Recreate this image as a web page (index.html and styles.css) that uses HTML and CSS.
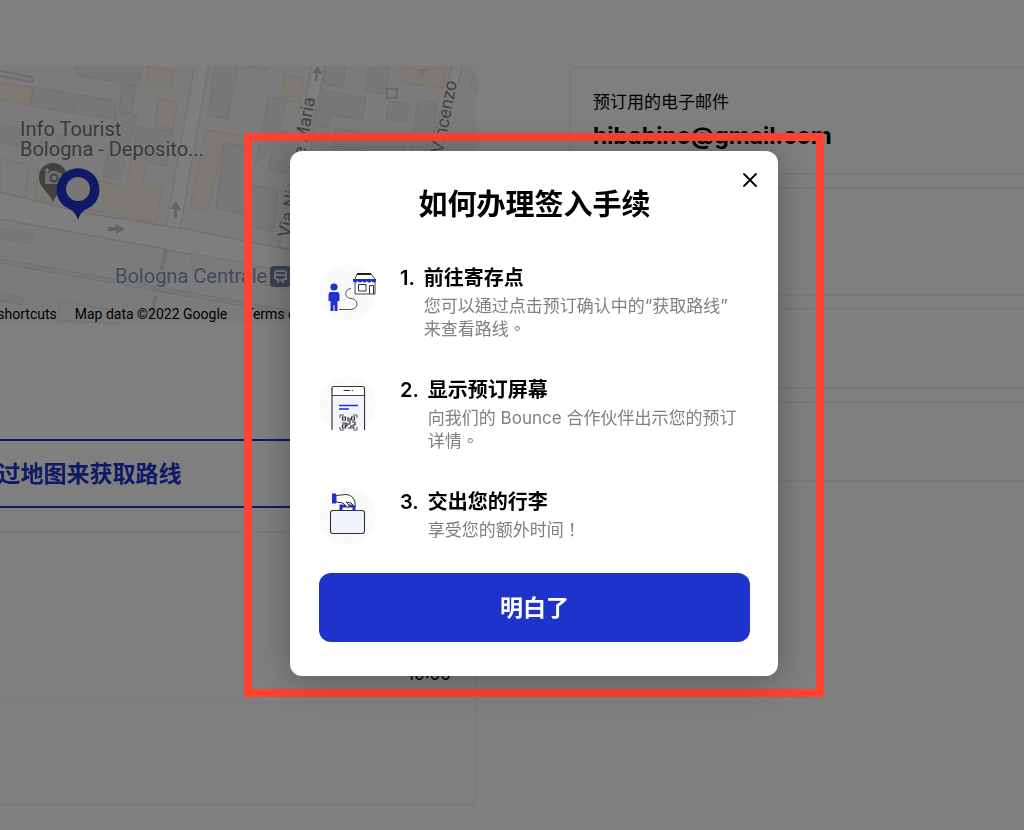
FILE: index.html
```html
<!DOCTYPE html>
<html lang="zh-Hans">
<head>
    <meta charset="UTF-8">
    <meta name="viewport" content="width=device-width, initial-scale=1.0">
    <title>Bounce</title>
    <link rel="stylesheet" href="styles.css">
</head>
<body>
    <main class="page">
        <section class="main-column">
            <div class="map">
                <svg class="map-canvas" viewBox="-321 0 798 258" preserveAspectRatio="xMidYMid slice" aria-hidden="true">
                    <rect x="-321" y="0" width="798" height="258" fill="#f7f7f8"/>
                    <!-- streets -->
                    <g fill="#fdfdfd" stroke="#dfe1e4" stroke-width="1.5">
                        <path d="M-321 75 L0 126 L80 146 L165 160 L181 162 L280 182 L477 222 V250 L280 206 L168 184 L165 183 L0 153 L-321 95Z"/>
                        <path d="M195 -2 L209 -2 L180 163 L166 160Z" stroke-width="1.2"/>
                        <path d="M312 -2 L325 -2 L293 184 L279 181Z"/>
                        <path d="M452 -2 L463 -2 L440 90 L430 90Z"/>
                    </g>
                    <!-- rails -->
                    <path d="M-321 132 L0 195 L243 238 L477 284" fill="none" stroke="#d6dce6" stroke-width="5"/>
                    <path d="M-321 132 L0 195 L243 238 L477 284" fill="none" stroke="#eceff4" stroke-width="3"/>
                    <path d="M166 184 L157 224 M156 230 L151 250" fill="none" stroke="#dddfe2" stroke-width="4"/>
                    <!-- buildings -->
                    <g fill="#eeeeef" stroke="#e0e1e3" stroke-width="1">
                        <path d="M77 -2 L143 -2 L139 20 L76 9Z"/>
                        <path d="M33 21 L116 35 L114 53 L73 47 L31 40Z"/>
                        <path d="M75 29 L73 47"/>
                        <path d="M122 19 L136 20 L131 47 L119 45Z"/>
                        <path d="M116 45 L138 49 L128 82 L119 114 L103 111Z"/>
                        <path d="M138 61 L172 65 L167 100 L148 96 L134 76Z"/>
                        <path d="M215 -2 L238 -2 L228 53 L208 49Z"/>
                        <path d="M240 -2 L267 -2 L266 6Z"/>
                        <path d="M269 31 L286 34 L279 64 L300 70 L298 108 L269 103 L271 82 L255 98 L263 58Z"/>
                        <path d="M0 59 L65 70 L64 88 L0 77Z"/>
                        <path d="M224 76 L251 83 L243 148 L216 142Z"/>
                        <path d="M253 119 L278 124 L274 166 L246 160Z"/>
                        <path d="M326 -2 L346 -2 L343 21 L323 18Z"/>
                        <path d="M369 -2 L389 -2 L386 28 L365 25Z"/>
                        <path d="M320 24 L366 32 L362 54 L331 49 L329 62 L312 59Z"/>
                        <path d="M389 35 L409 37 L406 56 L386 53Z"/>
                        <path d="M418 34 L437 37 L432 90 L410 86Z"/>
                        <path d="M336 62 L405 74 L404 88 L332 82Z"/>
                        <path d="M0 162 L33 168 L32 178 L0 172Z"/>
                        <path d="M0 227 L24 232 L22 239 L0 235Z"/>
                        <path d="M60 235 L122 246 L120 258 L58 254Z" fill="none"/>
                        <path d="M0 93 L29 99 L25 132 L0 127Z" fill="none"/>
                    </g>
                    <g fill="#f9f0e7" stroke="#f3e2d0" stroke-width="1">
                        <path d="M0 17 L32 21 L30 39 L0 34Z"/>
                        <path d="M148 0 L174 5 L171 23 L146 19Z"/>
                        <path d="M158 32 L177 36 L173 63 L155 60Z"/>
                        <path d="M206 64 L250 71 L249 80 L224 77 L208 145 L190 141Z"/>
                        <path d="M284 9 L304 12 L300 37 L281 34Z"/>
                        <path d="M402 -2 L447 -2 L444 22 L401 17Z"/>
                        <path d="M472 11 L477 12 V25 L470 23Z"/>
                        <path d="M131 92 L146 96 L143 117 L162 121 L157 157 L62 139 L34 133 L38 103 L80 111 L127 121Z"/>
                        <path d="M191 187 L290 206 L286 223 L193 204Z" fill="#f8f5f1"/>
                    </g>
                    <path d="M0 5 L31 11 Q34 13 32 16 L0 10" fill="none" stroke="#d2dae4" stroke-width="2"/>
                    <rect x="387" y="23" width="10" height="9" fill="none" stroke="#ccd5df" stroke-width="2"/>
                    <path d="M418 4 h10 M422 4 v6" stroke="#f0d9c0" stroke-width="2"/>
                    <!-- one way arrows -->
                    <g fill="#c8c8c9">
                        <path d="M108 161 h8 v-3 l9 5 -9 5 v-3 h-8Z"/>
                        <path d="M174 152 v-9 h-4 l6 -8 5 9 h-4 v8Z"/>
                        <path d="M314 15 l2 -8 h-4 l6 -7 4 8 h-4 l-1 7Z"/>
                    </g>
                    <!-- grey place pin -->
                    <path d="M53 137 C51 127 39 123 39 111 A14 14 0 0 1 67 111 C67 123 55 127 53 137Z" fill="#828282"/>
                    <path d="M45 107 h4 l2 -2 h6 l2 2 h3 v11 h-17Z" fill="#dedede"/>
                    <circle cx="54" cy="112" r="3.5" fill="#dedede" stroke="#828282" stroke-width="2"/>
                    <path d="M47 102 v5 M44.500 104.500 h5" stroke="#eeeeee" stroke-width="1.500"/>
                    <!-- selected stash point pin -->
                    <path d="M78 154 C75 144 70 144 64 140 A21.500 21.500 0 1 1 92 140 C86 144 81 144 78 154Z" fill="#1e33cc"/>
                    <circle cx="78" cy="123" r="12" fill="#f3efeb"/>
                    <g class="map-label">
                        <text x="20" y="70">Info Tourist</text>
                        <text x="20" y="90">Bologna - Deposito...</text>
                        <text class="street" transform="translate(290 172) rotate(-80)">Via Nicolò</text>
                        <text class="street" transform="translate(303 101) rotate(-80)">de Maria</text>
                        <text class="street" transform="translate(443 88) rotate(-79)">Vincenzo</text>
                        <text class="station" x="115" y="217">Bologna Centrale</text>
                    </g>
                    <rect x="270" y="200" width="21" height="21" rx="4" fill="#7685ac"/>
                    <path d="M275 213 v-6 q0 -2 2 -2 h7 q2 0 2 2 v6 h-3 M275 213 h3 M275 209 h11 M278 217 v-3 h5 v3" fill="none" stroke="#e8ebf3" stroke-width="2"/>
                </svg>
                <div class="map-credits">
                    <span>Keyboard shortcuts</span>
                    <span>Map data ©2022 Google</span>
                    <span>Terms of Use</span>
                    <span>Report a map error</span>
                </div>
            </div>
            <button class="directions-btn" type="button">通过地图来获取路线</button>
            <div class="card hours">
                <div class="hours-row"><span>10:00</span></div>
            </div>
        </section>
        <aside class="side-column">
            <div class="card info tall">
                <p class="info-label">预订用的电子邮件</p>
                <p class="info-value">hibabino@gmail.com</p>
            </div>
            <div class="card info tall"></div>
            <div class="card info"></div>
            <div class="card info"></div>
        </aside>
    </main>

    <div class="overlay">
        <div class="highlight">
            <div class="modal" role="dialog" aria-modal="true" aria-labelledby="modalTitle">
                <button class="close-btn" type="button" aria-label="关闭">
                    <svg width="17" height="17" viewBox="0 0 17 17"><path d="M3 3 L15 15 M15 3 L3 15" stroke="#000" stroke-width="1.8" stroke-linecap="round"/></svg>
                </button>
                <h1 class="modal-title" id="modalTitle">如何办理签入手续</h1>
                <div class="steps">
                    <div class="step">
                        <svg class="step-icon" viewBox="0 0 57 57" aria-hidden="true">
                            <circle cx="28.500" cy="28.500" r="28.500" fill="#fafafa"/>
                            <circle cx="15" cy="23" r="3.600" fill="#1e33cc"/>
                            <path d="M12 28 h6 q2.500 0 2.500 3 v6 h-2 v10 h-3 v-6 h-1 v6 h-3 v-10 h-2 v-6 q0 -3 2.500 -3Z" fill="#1e33cc"/>
                            <path d="M20 45.500 H31 C40 45.500 40 35 32 34.500 C25 34 25 25 32 24.500" fill="none" stroke="#555" stroke-width="1"/>
                            <path d="M38 10 H52 L56 15 V30 H36 V15Z" fill="#fff" stroke="#444" stroke-width="1"/>
                            <path d="M38 10 H52" stroke="#111" stroke-width="1.800"/>
                            <path d="M34 15 H57 V17 a2.500 2.500 0 0 1 -4.600 0 a2.500 2.500 0 0 1 -4.600 0 a2.500 2.500 0 0 1 -4.600 0 a2.500 2.500 0 0 1 -4.600 0 a2.500 2.500 0 0 1 -4.600 0Z" fill="#1e33cc"/>
                            <path d="M39.500 20.500 h7.500 v6.500 h-7.500Z M50.500 30 v-8.500 h4 v8.500" fill="none" stroke="#333" stroke-width="1"/>
                        </svg>
                        <span class="step-number">1.</span>
                        <div class="step-body">
                            <h2 class="step-title">前往寄存点</h2>
                            <p class="step-text" lang="zh-Hant">您可以通过点击预订确认中的“获取路线”来查看路线。</p>
                        </div>
                    </div>
                    <div class="step">
                        <svg class="step-icon" viewBox="0 0 57 57" aria-hidden="true">
                            <circle cx="28.500" cy="28.500" r="28.500" fill="#fafafa"/>
                            <path d="M13 54 V12.500 q0 -2 2 -2 H43.500 q2 0 2 2 V54" fill="#fff" stroke="#333" stroke-width="1.200"/>
                            <path d="M14 20 H45 V53 H14Z" fill="#f2f5ff"/>
                            <path d="M13 19.500 H45.500" stroke="#444" stroke-width="1"/>
                            <path d="M24.500 14.500 h7 M33 14.500 h1" stroke="#333" stroke-width="1"/>
                            <path d="M20 29.500 H39 M20 33 H30" stroke="#1e33cc" stroke-width="1.500"/>
                            <path d="M21 42 v-3 h4 M34 39 h4 v3 M21 51 v3 h4 M34 54 h4 v-3" fill="none" stroke="#555" stroke-width="1"/>
                            <g fill="none" stroke="#333" stroke-width="1.200">
                                <path d="M23.500 41 h3 v3 h-3Z M32.500 41 h3 v3 h-3Z M23.500 49 h3 v3 h-3Z"/>
                                <path d="M29 41 v4 h2 v3 h-3 v2 h-2 M23 47 h4 v1 M33 46 h3 v3 h-2 v3 h2 M29 52 h3 v-3 M31 42 v2"/>
                            </g>
                        </svg>
                        <span class="step-number">2.</span>
                        <div class="step-body">
                            <h2 class="step-title">显示预订屏幕</h2>
                            <p class="step-text" lang="zh-Hant">向我们的 Bounce 合作伙伴出示您的预订详情。</p>
                        </div>
                    </div>
                    <div class="step">
                        <svg class="step-icon" viewBox="0 0 57 57" aria-hidden="true">
                            <circle cx="28.500" cy="28.500" r="28.500" fill="#fafafa"/>
                            <path d="M22 23 V18 H35 V23" fill="none" stroke="#1e33cc" stroke-width="3"/>
                            <path d="M17 7.500 L27 6.500 Q34 7 36 14 V19 L32 15 L27 14 L30 17 Q31 20 28 19 L24 15 L17 14Z" fill="#fff" stroke="#333" stroke-width="1" stroke-linejoin="round"/>
                            <rect x="13" y="5.500" width="4" height="10" fill="#1e33cc"/>
                            <rect x="11.500" y="22.500" width="34" height="23" rx="2.500" fill="#f0f4ff" stroke="#333" stroke-width="1.100"/>
                        </svg>
                        <span class="step-number">3.</span>
                        <div class="step-body">
                            <h2 class="step-title">交出您的行李</h2>
                            <p class="step-text" lang="zh-Hant">享受您的额外时间！</p>
                        </div>
                    </div>
                </div>
                <button class="confirm-btn" type="button">明白了</button>
            </div>
        </div>
    </div>
</body>
</html>
```

FILE: styles.css
```css
* {
    margin: 0;
    padding: 0;
    box-sizing: border-box;
}
body {
    font-family: Inter, 'Noto Sans CJK SC', sans-serif;
    font-size: 17px;
    color: #000;
    background: #fff;
    min-height: 100vh;
    overflow: hidden;
}
button {
    font-family: inherit;
    cursor: pointer;
}
/* page behind the dialog, wider than the window */
.page {
    display: flex;
    align-items: flex-start;
    gap: 92px;
    padding-top: 66px;
    margin: 0 -200px 0 -321px;
}
.main-column {
    flex: 0 0 798px;
}
.side-column {
    flex: 1;
    display: flex;
    flex-direction: column;
    gap: 12px;
}
.map {
    position: relative;
    height: 258px;
    border-radius: 12px;
    overflow: hidden;
}
.map-canvas {
    display: block;
    width: 100%;
    height: 100%;
}
.map-label text {
    font-family: Roboto, sans-serif;
    font-size: 20px;
    fill: #757575;
    stroke: #f8f8f8;
    stroke-width: 3px;
    paint-order: stroke;
}
.map-label .street {
    font-size: 18px;
    fill: #858585;
}
.map-label .station {
    fill: #8794b8;
}
.map-credits {
    position: absolute;
    right: 0;
    bottom: 0;
    display: flex;
    gap: 18px;
    padding: 0 14px;
    font-family: Roboto, sans-serif;
    font-size: 14px;
    line-height: 20px;
    white-space: nowrap;
}
.directions-btn {
    display: block;
    width: 100%;
    height: 69px;
    margin-top: 115px;
    padding-bottom: 4px;
    border: 2px solid #1e33cc;
    border-radius: 12px;
    background: #fff;
    color: #1e33cc;
    font-size: 23px;
    font-weight: 600;
}
.card {
    border: 2px solid #f3f3f3;
    border-radius: 8px;
}
.hours {
    height: 275px;
    margin-top: 23px;
    padding: 0 24px;
}
.hours-row {
    display: flex;
    justify-content: flex-end;
    align-items: flex-end;
    height: 170px;
    padding-bottom: 18px;
    border-bottom: 1px solid #f6f6f6;
}
.info {
    min-height: 81px;
    padding: 22px;
}
.info.tall {
    min-height: 109px;
}
.info-label {
    line-height: 24px;
}
.info-value {
    margin-top: 8px;
    font-size: 23px;
    font-weight: 700;
    line-height: 28px;
}
.overlay {
    position: fixed;
    inset: 0;
    display: flex;
    align-items: center;
    justify-content: center;
    padding-left: 44px;
    background: rgba(0, 0, 0, 0.5);
}
.highlight {
    width: 580px;
    max-width: 100%;
    padding: 10px 38px 13px;
    border: 8px solid #ff432f;
}
.modal {
    position: relative;
    padding: 30px 28px 34px 29px;
    border-radius: 12px;
    background: #fff;
    box-shadow: 0 4px 36px rgba(0, 0, 0, 0.3);
}
.close-btn {
    position: absolute;
    top: 20px;
    right: 20px;
    width: 17px;
    height: 17px;
    border: none;
    background: none;
}
.close-btn svg {
    display: block;
}
.modal-title {
    text-align: center;
    font-size: 29px;
    font-weight: 600;
    line-height: 48px;
}
.steps {
    display: flex;
    flex-direction: column;
    gap: 35px;
    margin: 35px 0 28px;
}
.step {
    display: flex;
    align-items: flex-start;
}
.step-icon {
    flex: none;
    width: 57px;
    height: 57px;
    margin-right: 24px;
}
.step-number {
    margin-right: 9px;
    font-size: 20px;
    font-weight: 600;
    line-height: 28px;
}
.step-body {
    flex: 1;
    padding-right: 7px;
}
.step-title {
    font-size: 20px;
    font-weight: 600;
    line-height: 28px;
}
.step-text {
    margin-top: 3px;
    font-family: Inter, 'Noto Sans CJK TC', sans-serif;
    line-height: 23px;
    color: #7f7f84;
}
.confirm-btn {
    display: block;
    width: 100%;
    height: 69px;
    padding-bottom: 4px;
    border: none;
    border-radius: 12px;
    background: #1e33cc;
    color: #fff;
    font-size: 23px;
    font-weight: 600;
}
```
